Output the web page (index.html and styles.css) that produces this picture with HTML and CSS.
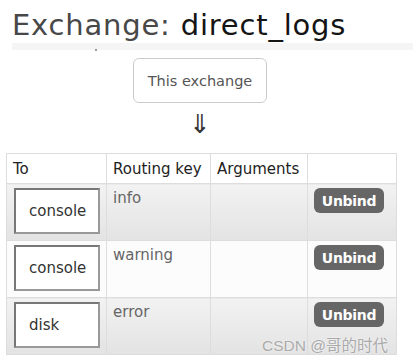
FILE: index.html
```html
<!DOCTYPE html>
<html lang="en">
<head>
  <meta charset="UTF-8">
  <title>Exchange: direct_logs</title>
  <link rel="stylesheet" href="styles.css">
</head>
<body>
  <h1 class="title">Exchange: <b>direct_logs</b></h1>
  <div class="strip"><span class="dot"></span></div>

  <div class="source">
    <div class="this-box">This exchange</div>
    <div class="arrow">&#8659;</div>
  </div>

  <table class="bindings">
    <thead>
      <tr><th class="c-to">To</th><th class="c-key">Routing key</th><th class="c-args">Arguments</th><th class="c-act"></th></tr>
    </thead>
    <tbody>
      <tr class="alt1">
        <td><span class="queue">console</span></td>
        <td class="key">info</td>
        <td></td>
        <td><button class="unbind">Unbind</button></td>
      </tr>
      <tr class="alt0">
        <td><span class="queue">console</span></td>
        <td class="key">warning</td>
        <td></td>
        <td><button class="unbind">Unbind</button></td>
      </tr>
      <tr class="alt1">
        <td><span class="queue">disk</span></td>
        <td class="key">error</td>
        <td></td>
        <td><button class="unbind">Unbind</button></td>
      </tr>
    </tbody>
  </table>

  <div class="watermark">CSDN @哥的时代</div>
</body>
</html>
```

FILE: styles.css
```css
body { margin: 0; font-family: "DejaVu Sans", Verdana, sans-serif; background: #fff; color: #333; position: relative; width: 413px; height: 363px; overflow: hidden; }
.title { margin: 0; padding: 9px 0 0 12px; font-size: 29px; font-weight: normal; line-height: 33px; letter-spacing: 0.8px; color: #484848; }
.title b { font-weight: normal; color: #141414; }
.strip { margin: 1px 0 0 12px; height: 7px; background: #f5f5f5; position: relative; }
.dot { position: absolute; left: 83px; top: 6px; width: 2px; height: 2px; background: #999; }
.source { display: flex; flex-direction: column; align-items: center; margin: 8px 13px 0 0; }
.this-box { width: 134px; height: 45px; box-sizing: border-box; border: 1px solid #ccc; border-radius: 6px; display: flex; align-items: center; justify-content: center; font-size: 14.5px; color: #555; }
.arrow { font-size: 26px; line-height: 28px; color: #333; margin-top: 7px; }
.bindings { margin: 15px 0 0 6px; border-collapse: collapse; width: 391px; font-size: 15px; }
.bindings th, .bindings td { border: 1px solid #ddd; padding: 5px 6px 3px; text-align: left; vertical-align: top; }
.bindings th { font-weight: normal; color: #222; height: 21px; padding: 4px 6px; vertical-align: middle; background: #fff; }
.c-to { width: 87px; }
.c-key { width: 91px; }
.c-args { width: 84px; }
.bindings tbody td { height: 48px; }
.alt1 td { background: linear-gradient(#f2f2f2, #e3e3e3); }
.alt0 td { background: #fcfcfc; }
.key { color: #666; }
.queue { display: flex; align-items: center; width: 86px; height: 46px; box-sizing: border-box; padding-left: 13px; margin: -1px 0 0 1px; background: #fff; border: 2px solid #888; border-color: #777 #999 #999 #777; color: #333; }
.unbind { margin-top: -1px; border: none; border-radius: 6px; background: #666; color: #fff; font-family: "DejaVu Sans", Verdana, sans-serif; font-weight: bold; font-size: 14px; letter-spacing: -0.3px; padding: 2px 4px; width: 70px; height: 25px; }
.watermark { position: absolute; left: 262px; top: 333px; font-family: "Liberation Sans", "Noto Sans CJK SC", sans-serif; font-size: 15.5px; color: #aaa; text-shadow: 0 0 2px #fff; }
```
